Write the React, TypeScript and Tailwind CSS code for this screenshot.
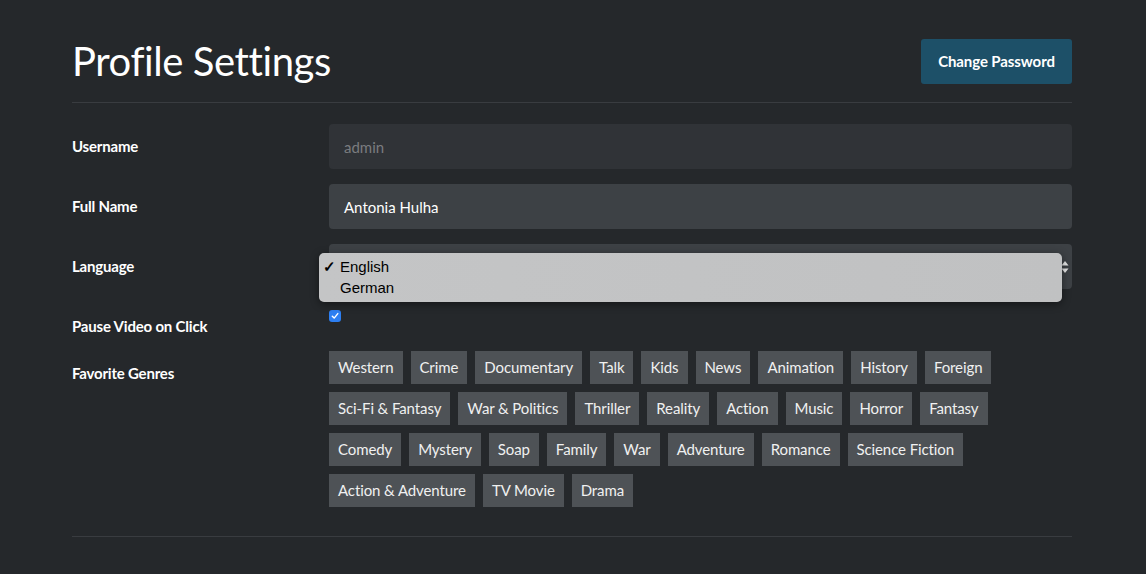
import React from "react";

const genreRows = [
  ["Western","Crime","Documentary","Talk","Kids","News","Animation","History","Foreign"],
  ["Sci-Fi & Fantasy","War & Politics","Thriller","Reality","Action","Music","Horror","Fantasy"],
  ["Comedy","Mystery","Soap","Family","War","Adventure","Romance","Science Fiction"],
  ["Action & Adventure","TV Movie","Drama"],
];

export default function App() {
  return (
    <div className="min-h-[574px] w-full bg-[#25282b] text-white" style={{ fontFamily: "Lato, 'Open Sans', sans-serif" }}>
      <div className="pl-[72px] pr-[74px] pt-[39px]">
        <div className="flex h-[45px] items-center justify-between">
          <h1 className="-mt-[2px] text-[40px] leading-none font-normal tracking-[-0.4px] text-white">Profile Settings</h1>
          <button className="h-[45px] w-[151px] rounded-[3px] bg-[#1d5068] text-[15px] font-bold tracking-[-0.1px] text-white">Change Password</button>
        </div>
        <div className="mt-[18px] border-t border-[#393c40]" />

        <div className="mt-[21px] flex flex-col">
          <div className="flex h-[45px] items-center">
            <label className="w-[257px] shrink-0 text-[15px] font-bold tracking-[-0.2px]">Username</label>
            <div className="flex h-[45px] flex-1 items-center rounded-[4px] bg-[#303337] px-[15px] pt-[1px] text-[15px] text-[#7a7c7f]">admin</div>
          </div>
          <div className="mt-[15px] flex h-[45px] items-center">
            <label className="w-[257px] shrink-0 text-[15px] font-bold tracking-[-0.2px]">Full Name</label>
            <div className="flex h-[45px] flex-1 items-center rounded-[4px] bg-[#3d4145] px-[15px] pt-[1px] text-[15px] text-white">Antonia Hulha</div>
          </div>
          <div className="mt-[15px] flex h-[45px] items-center">
            <label className="w-[257px] shrink-0 text-[15px] font-bold tracking-[-0.2px]">Language</label>
            <div className="relative flex h-[45px] flex-1 items-center justify-end rounded-[4px] bg-[#3d4145] pr-[3px]">
              <svg width="8" height="12" viewBox="0 0 8 12">
                <path d="M4 0 L7.5 4.5 L0.5 4.5 Z" fill="#e8e8e8" />
                <path d="M4 12 L7.5 7.5 L0.5 7.5 Z" fill="#e8e8e8" />
              </svg>
              <div
                className="absolute left-[-10px] top-[9px] h-[49px] w-[743px] rounded-[5px] bg-gradient-to-r from-[#c4c5c6] to-[#c0c1c2] text-[15px] leading-[21px] text-black shadow-[0_2px_8px_rgba(0,0,0,0.45)]"
                style={{ fontFamily: "'Liberation Sans', Arial, sans-serif" }}
              >
                <div className="pt-[3px]">
                  <div className="flex items-center">
                    <span className="w-[21px] pl-[4px] text-[15px] font-bold">✓</span>
                    <span>English</span>
                  </div>
                  <div className="flex items-center">
                    <span className="w-[21px]" />
                    <span>German</span>
                  </div>
                </div>
              </div>
            </div>
          </div>
          <div className="mt-[15px] flex h-[45px] items-center">
            <label className="w-[257px] shrink-0 text-[15px] font-bold tracking-[-0.2px]">Pause Video on Click</label>
            <div className="flex h-[45px] flex-1 items-start pt-[6px]">
              <div className="flex h-[12px] w-[12px] items-center justify-center rounded-[3px] bg-[#2d7ff2]">
                <svg width="8" height="8" viewBox="0 0 8 8">
                  <path d="M1.3 4.2 L3.2 6.1 L6.8 1.6" stroke="white" strokeWidth="1.4" fill="none" strokeLinecap="round" strokeLinejoin="round" />
                </svg>
              </div>
            </div>
          </div>
          <div className="mt-[2px] flex items-start">
            <label className="w-[257px] shrink-0 pt-[12px] text-[15px] leading-[20px] font-bold tracking-[-0.2px]">Favorite Genres</label>
            <div className="flex flex-1 flex-col gap-y-[8px]">
              {genreRows.map((row, i) => (
                <div key={i} className="flex gap-x-[8px]">
                  {row.map((g) => (
                    <span key={g} className="flex h-[33px] items-center bg-[#4e5256] px-[9px] text-[15px] tracking-[-0.1px] text-[#f0f0f0]">
                      {g}
                    </span>
                  ))}
                </div>
              ))}
            </div>
          </div>
        </div>
        <div className="mt-[29px] border-t border-[#393c40]" />
      </div>
    </div>
  );
}
